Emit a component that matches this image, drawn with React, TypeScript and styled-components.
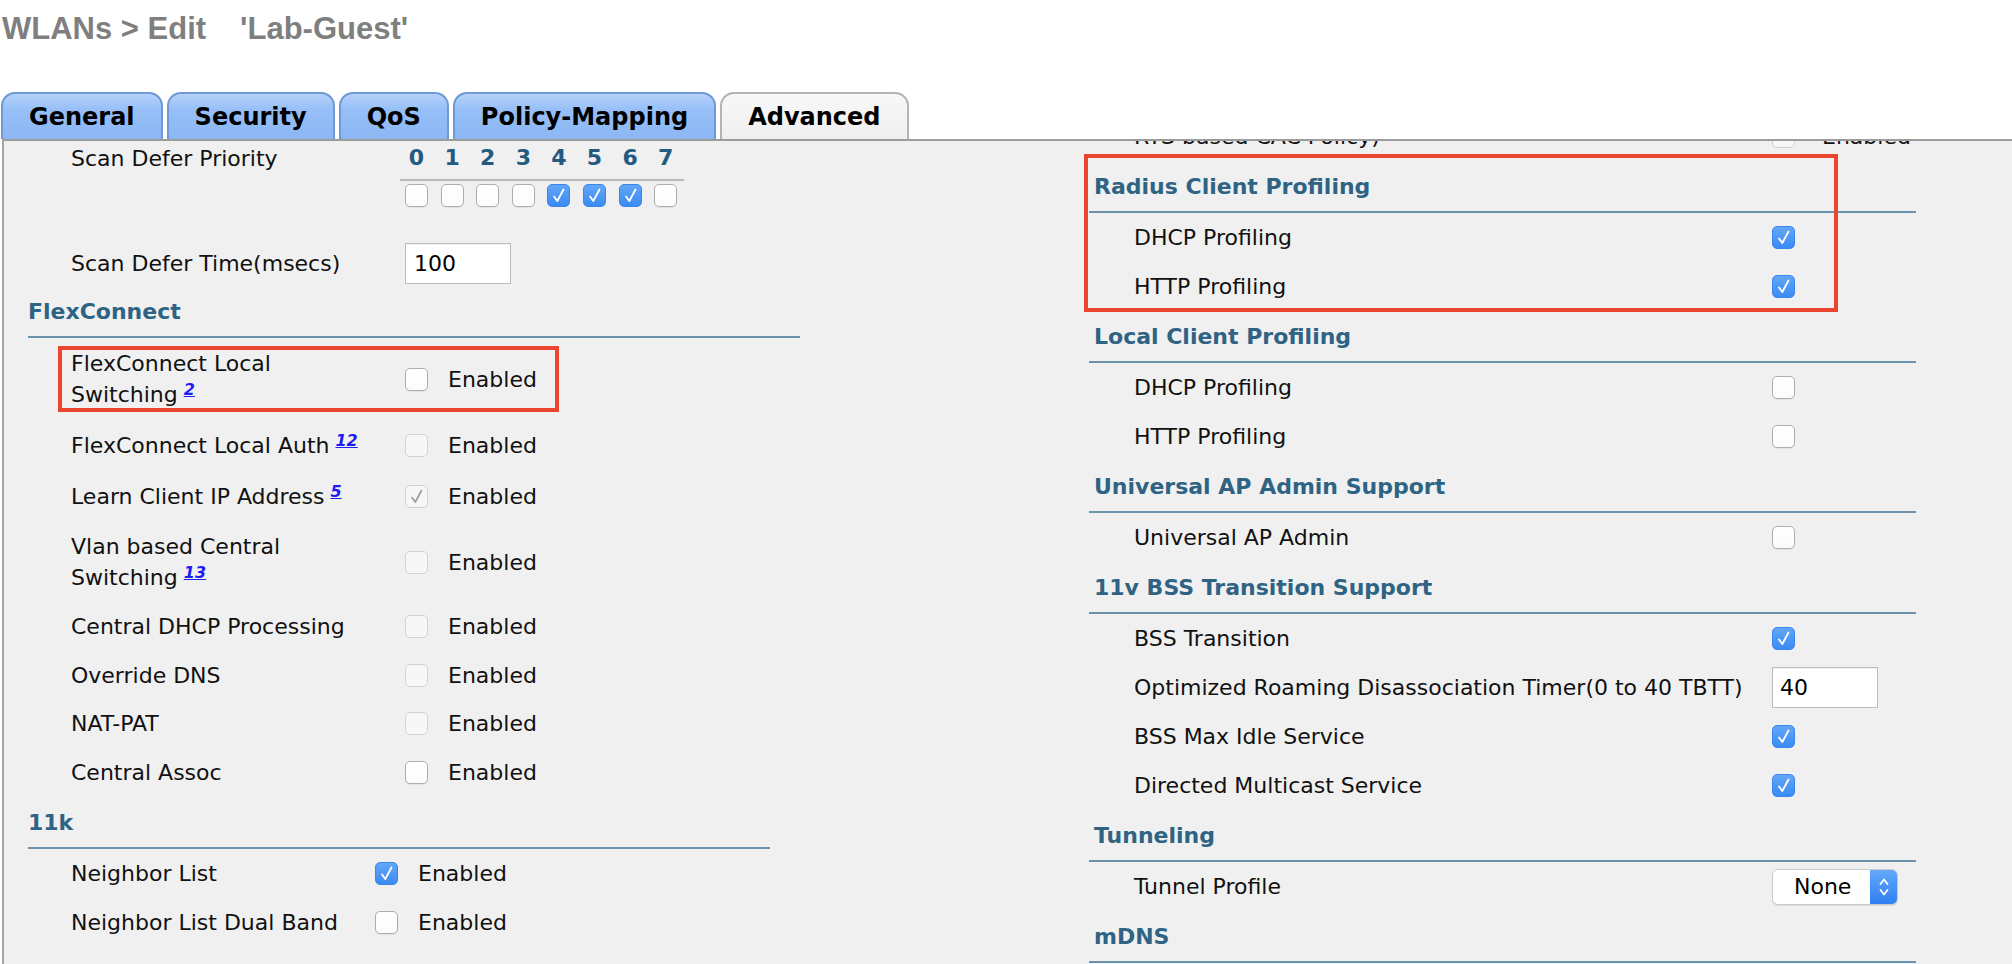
import React from "react";
import styled, { createGlobalStyle } from "styled-components";

const GlobalStyle = createGlobalStyle`
  html, body { margin: 0; padding: 0; background: #ffffff; }
  body {
    font-family: "DejaVu Sans", Verdana, sans-serif;
    color: #111;
    width: 2012px;
    height: 964px;
    overflow: hidden;
  }
`;

const Page = styled.div`
  width: 2012px;
  height: 964px;
  display: flex;
  flex-direction: column;
  overflow: hidden;
`;

const Title = styled.h1`
  margin: 0;
  padding: 11px 0 0 2px;
  height: 36px;
  font-family: "Liberation Sans", Arial, sans-serif;
  font-weight: bold;
  font-size: 31px;
  line-height: 36px;
  color: #7f7f7f;
  white-space: nowrap;
`;

const TitleName = styled.span`
  margin-left: 34px;
`;

const TabBar = styled.div`
  display: flex;
  align-items: flex-end;
  gap: 4px;
  padding-left: 1px;
  height: 47px;
  margin-top: 45px;
`;

const Tab = styled.div<{ $active?: boolean }>`
  height: 47px;
  box-sizing: border-box;
  padding: 0 26px;
  display: flex;
  align-items: center;
  font-weight: bold;
  font-size: 24px;
  color: #000;
  border: 2px solid ${(p) => (p.$active ? "#b4b4b4" : "#6e99d6")};
  border-bottom: none;
  border-radius: 14px 14px 0 0;
  background: ${(p) =>
    p.$active
      ? "linear-gradient(#f8f8f8, #efefef)"
      : "linear-gradient(#b5d2fb, #97bff7 35%, #8cb7f4)"};
`;

const Panel = styled.div`
  flex: 1;
  margin-left: 2px;
  border-top: 2px solid #9c9c9c;
  border-left: 2px solid #a4a4a4;
  background: #f0f0f0;
  display: grid;
  grid-template-columns: 1085px 827px;
  align-items: start;
  overflow: hidden;
`;

const Column = styled.div<{ $shift?: number }>`
  display: flex;
  flex-direction: column;
  margin-top: ${(p) => p.$shift ?? 0}px;
`;

const Row = styled.div<{ $h?: number; $pl: number }>`
  position: relative;
  display: flex;
  align-items: center;
  height: ${(p) => p.$h ?? 49}px;
  padding-left: ${(p) => p.$pl}px;
  flex-shrink: 0;
`;

const Label = styled.div<{ $w: number; $pr?: number }>`
  width: ${(p) => p.$w}px;
  padding-right: ${(p) => p.$pr ?? 30}px;
  box-sizing: border-box;
  flex-shrink: 0;
  font-size: 22px;
  line-height: 31px;
`;

const TopLabel = styled(Label)`
  align-self: flex-start;
  line-height: 36px;
`;

const Ref = styled.a`
  color: #1d1df2;
  font-weight: bold;
  font-style: italic;
  text-decoration: underline;
  font-size: 16px;
  line-height: 0;
  vertical-align: 7px;
  margin-left: 6px;
  cursor: pointer;
`;

const Enabled = styled.span<{ $gap?: number }>`
  margin-left: ${(p) => p.$gap ?? 20}px;
  font-size: 22px;
`;

const SectionHead = styled.div<{ $w: number; $ml: number; $pl?: number }>`
  margin-left: ${(p) => p.$ml}px;
  width: ${(p) => p.$w}px;
  height: 50px;
  box-sizing: content-box;
  padding-left: ${(p) => p.$pl ?? 0}px;
  display: flex;
  align-items: center;
  border-bottom: 2px solid #6a92ab;
  font-weight: bold;
  font-size: 22px;
  color: #2f6384;
  flex-shrink: 0;
`;

const Section = styled.div`
  position: relative;
  display: flex;
  flex-direction: column;
`;

const Callout = styled.div<{ $l: number; $t: number; $w: number; $h: number }>`
  position: absolute;
  left: ${(p) => p.$l}px;
  top: ${(p) => p.$t}px;
  width: ${(p) => p.$w}px;
  height: ${(p) => p.$h}px;
  box-sizing: border-box;
  border: 4px solid #e9452f;
  pointer-events: none;
`;

const PriorityRow = styled.div`
  display: flex;
  align-items: flex-start;
  height: 99px;
  padding-left: 67px;
  flex-shrink: 0;
`;

const PriorityGrid = styled.div`
  display: flex;
  flex-direction: column;
`;

const DigitRow = styled.div`
  display: flex;
  gap: 12.6px;
  padding: 0 7px 0 5px;
  height: 32px;
  align-items: center;
`;

const Digit = styled.span`
  width: 23px;
  text-align: center;
  font-weight: bold;
  font-size: 22px;
  color: #235a80;
`;

const BoxRow = styled.div`
  display: flex;
  gap: 12.6px;
  margin-top: 6px;
  padding: 3px 7px 0 5px;
  border-top: 2px solid #b9b9b9;
`;

type BoxState = "off" | "on" | "dis" | "disOn";

const Box = styled.span<{ $s: BoxState }>`
  width: 23px;
  height: 23px;
  box-sizing: border-box;
  flex-shrink: 0;
  border-radius: 5px;
  display: inline-flex;
  align-items: center;
  justify-content: center;
  border: 1.5px solid
    ${(p) =>
      p.$s === "on" ? "#3a86ea" : p.$s === "off" ? "#adadad" : "#d2d2d2"};
  background: ${(p) =>
    p.$s === "on"
      ? "linear-gradient(#62a6f8, #3a8bf3)"
      : p.$s === "off"
      ? "linear-gradient(#ffffff, #fbfbfb)"
      : "#f7f7f7"};
  box-shadow: ${(p) =>
    p.$s === "off" ? "0 1px 1px rgba(0,0,0,0.06)" : "none"};
`;

const CheckBox = ({ s }: { s: BoxState }) => (
  <Box $s={s}>
    {(s === "on" || s === "disOn") && (
      <svg width="15" height="17" viewBox="0 0 15 17">
        <path
          d="M3 9.5 L6.3 14 L12.5 2.5"
          fill="none"
          stroke={s === "on" ? "#ffffff" : "#a0a0a0"}
          strokeWidth="1.8"
          strokeLinecap="round"
          strokeLinejoin="round"
        />
      </svg>
    )}
  </Box>
);

const TextInput = styled.div<{ $pl: number }>`
  width: 106px;
  height: 41px;
  box-sizing: border-box;
  background: #fff;
  border: 1.5px solid #bdbdbd;
  box-shadow: inset 0 1px 1px rgba(0, 0, 0, 0.06);
  display: flex;
  align-items: center;
  padding-left: ${(p) => p.$pl}px;
  font-size: 22px;
  color: #000;
`;

const Select = styled.div`
  width: 126px;
  height: 36px;
  box-sizing: border-box;
  display: flex;
  border: 1px solid #c9c9c9;
  border-radius: 6px;
  background: #fff;
  box-shadow: 0 1px 1px rgba(0, 0, 0, 0.08);
  overflow: hidden;
`;

const SelectValue = styled.span`
  flex: 1;
  display: flex;
  align-items: center;
  padding-left: 21px;
  font-size: 22px;
  color: #000;
`;

const Stepper = styled.span`
  width: 27px;
  display: flex;
  align-items: center;
  justify-content: center;
  background: linear-gradient(#63a8fa, #2e7ff0);
`;

const leftLabelW = 334;

type Item = {
  label: React.ReactNode;
  s: BoxState;
  h: number;
};

const flexRows: Item[] = [
  { label: <>FlexConnect Local Auth<Ref>12</Ref></>, s: "dis", h: 51 },
  { label: <>Learn Client IP Address<Ref>5</Ref></>, s: "disOn", h: 51 },
  { label: <>Vlan based Central Switching<Ref>13</Ref></>, s: "dis", h: 80 },
  { label: "Central DHCP Processing", s: "dis", h: 49 },
  { label: "Override DNS", s: "dis", h: 48 },
  { label: "NAT-PAT", s: "dis", h: 49 },
  { label: "Central Assoc", s: "off", h: 49 },
];

const RightRow = ({ label, children }: { label: string; children: React.ReactNode }) => (
  <Row $pl={45}>
    <Label $w={638} $pr={10}>{label}</Label>
    {children}
  </Row>
);

export default function App() {
  return (
    <Page>
      <GlobalStyle />
      <Title>
        WLANs &gt; Edit<TitleName>'Lab-Guest'</TitleName>
      </Title>
      <TabBar>
        <Tab>General</Tab>
        <Tab>Security</Tab>
        <Tab>QoS</Tab>
        <Tab>Policy-Mapping</Tab>
        <Tab $active>Advanced</Tab>
      </TabBar>
      <Panel>
        <Column>
          <PriorityRow>
            <TopLabel $w={329}>Scan Defer Priority</TopLabel>
            <PriorityGrid>
              <DigitRow>
                {[0, 1, 2, 3, 4, 5, 6, 7].map((d) => (
                  <Digit key={d}>{d}</Digit>
                ))}
              </DigitRow>
              <BoxRow>
                {[0, 1, 2, 3, 4, 5, 6, 7].map((d) => (
                  <CheckBox key={d} s={d >= 4 && d <= 6 ? "on" : "off"} />
                ))}
              </BoxRow>
            </PriorityGrid>
          </PriorityRow>
          <Row $h={46} $pl={67}>
            <Label $w={leftLabelW}>Scan Defer Time(msecs)</Label>
            <TextInput $pl={8}>100</TextInput>
          </Row>
          <SectionHead $ml={24} $w={772}>FlexConnect</SectionHead>
          <Row $h={82} $pl={67}>
            <Callout $l={54} $t={8} $w={501} $h={66} />
            <Label $w={leftLabelW}>
              FlexConnect Local Switching<Ref>2</Ref>
            </Label>
            <CheckBox s="off" />
            <Enabled>Enabled</Enabled>
          </Row>
          {flexRows.map((r, i) => (
            <Row key={i} $h={r.h} $pl={67}>
              <Label $w={leftLabelW}>{r.label}</Label>
              <CheckBox s={r.s} />
              <Enabled>Enabled</Enabled>
            </Row>
          ))}
          <SectionHead $ml={24} $w={742}>11k</SectionHead>
          <Row $pl={67}>
            <Label $w={304} $pr={10}>Neighbor List</Label>
            <CheckBox s="on" />
            <Enabled>Enabled</Enabled>
          </Row>
          <Row $pl={67}>
            <Label $w={304} $pr={10}>Neighbor List Dual Band</Label>
            <CheckBox s="off" />
            <Enabled>Enabled</Enabled>
          </Row>
        </Column>

        <Column $shift={-29}>
          <Row $pl={45}>
            <Label $w={638} $pr={10}>RTS based CAC Policy)</Label>
            <CheckBox s="dis" />
            <Enabled $gap={27}>Enabled</Enabled>
          </Row>
          <Section>
            <Callout $l={-5} $t={-7} $w={754} $h={158} />
            <SectionHead $ml={0} $w={822} $pl={5}>Radius Client Profiling</SectionHead>
            <RightRow label="DHCP Profiling"><CheckBox s="on" /></RightRow>
            <RightRow label="HTTP Profiling"><CheckBox s="on" /></RightRow>
          </Section>
          <SectionHead $ml={0} $w={822} $pl={5}>Local Client Profiling</SectionHead>
          <RightRow label="DHCP Profiling"><CheckBox s="off" /></RightRow>
          <RightRow label="HTTP Profiling"><CheckBox s="off" /></RightRow>
          <SectionHead $ml={0} $w={822} $pl={5}>Universal AP Admin Support</SectionHead>
          <RightRow label="Universal AP Admin"><CheckBox s="off" /></RightRow>
          <SectionHead $ml={0} $w={822} $pl={5}>11v BSS Transition Support</SectionHead>
          <RightRow label="BSS Transition"><CheckBox s="on" /></RightRow>
          <RightRow label="Optimized Roaming Disassociation Timer(0 to 40 TBTT)">
            <TextInput $pl={7}>40</TextInput>
          </RightRow>
          <RightRow label="BSS Max Idle Service"><CheckBox s="on" /></RightRow>
          <RightRow label="Directed Multicast Service"><CheckBox s="on" /></RightRow>
          <SectionHead $ml={0} $w={822} $pl={5}>Tunneling</SectionHead>
          <RightRow label="Tunnel Profile">
            <Select>
              <SelectValue>None</SelectValue>
              <Stepper>
                <svg width="14" height="24" viewBox="0 0 14 24">
                  <path d="M3.5 9 L7 4.5 L10.5 9" fill="none" stroke="#fff" strokeWidth="1.8" strokeLinecap="round" strokeLinejoin="round" />
                  <path d="M3.5 15 L7 19.5 L10.5 15" fill="none" stroke="#fff" strokeWidth="1.8" strokeLinecap="round" strokeLinejoin="round" />
                </svg>
              </Stepper>
            </Select>
          </RightRow>
          <SectionHead $ml={0} $w={822} $pl={5}>mDNS</SectionHead>
        </Column>
      </Panel>
    </Page>
  );
}
